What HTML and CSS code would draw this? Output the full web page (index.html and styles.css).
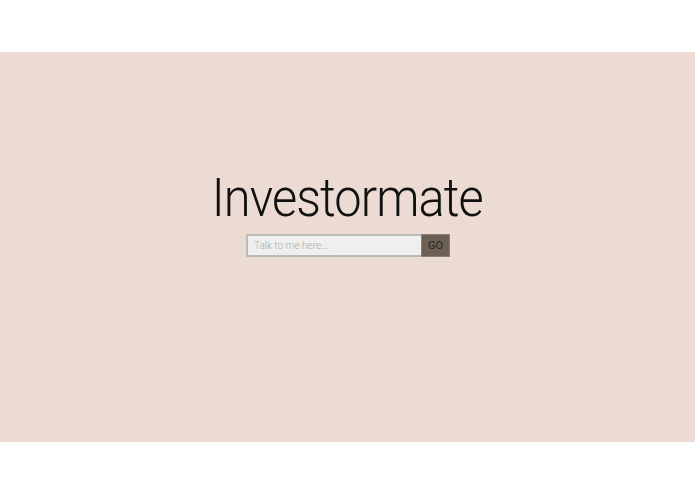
FILE: index.html
```html
<!DOCTYPE html>
<html>
<head>
<meta charset="utf-8">
<link rel="stylesheet" href="styles.css">
</head>
<body>
<div class="page">
  <section class="hero">
    <h1 class="title">Investormate</h1>
    <form class="search">
      <input class="search-input" type="text" placeholder="Talk to me here...">
      <button class="search-btn" type="button">GO</button>
    </form>
  </section>
</div>
</body>
</html>
```
FILE: styles.css
```css
html, body { margin: 0; padding: 0; background: #ffffff; }
.page { padding: 52px 0; }
.hero {
  box-sizing: border-box;
  height: 390px;
  padding-top: 118px;
  background: #ecdbd3;
  display: flex;
  flex-direction: column;
  align-items: center;
  font-family: "Roboto", "Liberation Sans", sans-serif;
}
.title {
  margin: 0 0 8px 0;
  font-weight: 300;
  font-size: 53px;
  line-height: 56px;
  color: #111;
  letter-spacing: -1px;
  transform: scaleX(0.92);
}
.search { display: flex; margin-left: 1px; }
.search-input {
  box-sizing: border-box;
  width: 175px;
  height: 23px;
  border: 2px solid #b9bcb5;
  border-right: none;
  background: #efefef;
  padding: 0 6px;
  font-family: "Roboto", sans-serif;
  font-weight: 300;
  font-size: 10px;
  outline: none;
}
.search-input::placeholder { color: #aaa; }
.search-btn {
  box-sizing: border-box;
  width: 29px;
  height: 23px;
  border: 1px solid #8a7f74;
  background: #6c6053;
  color: #2a241f;
  font-family: "Roboto", sans-serif;
  font-size: 11px;
  padding: 0;
}
```
